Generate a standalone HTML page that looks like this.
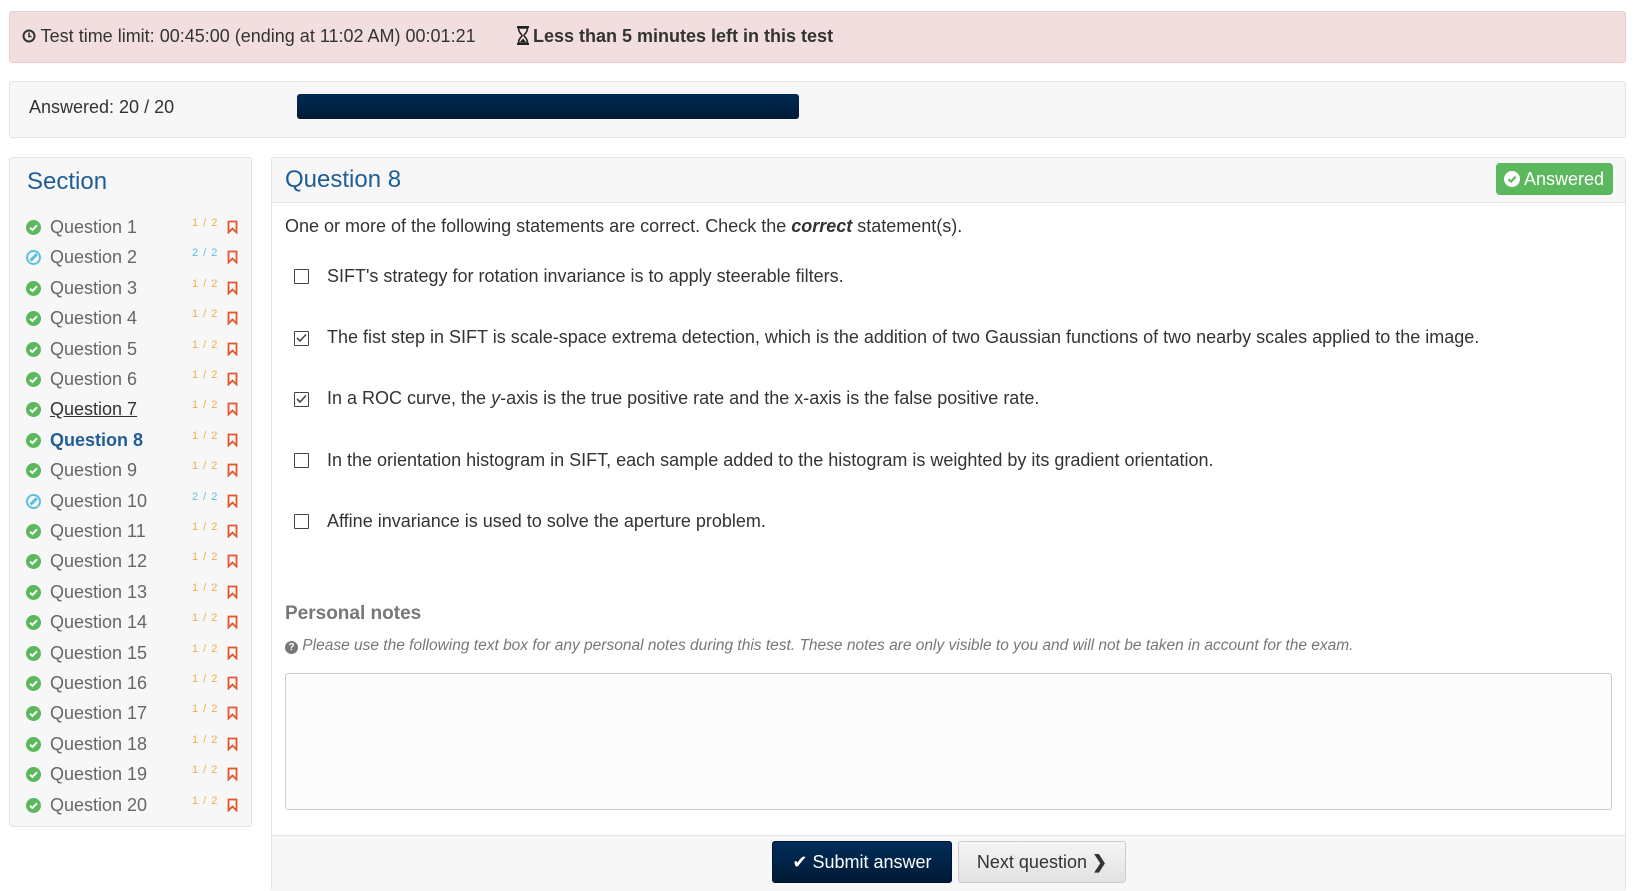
<!DOCTYPE html>
<html><head><meta charset="utf-8"><style>
*{box-sizing:border-box;margin:0;padding:0}
body{width:1636px;height:891px;background:#fff;font-family:"Liberation Sans",sans-serif;color:#333;position:relative;overflow:hidden;font-size:17px}
.abs{position:absolute}
.alert{left:9px;top:11px;width:1617px;height:52px;background:#f2dede;border:1px solid #ebccd1;border-radius:3px}
.well{left:9px;top:81px;width:1617px;height:57px;background:#f7f7f7;border:1px solid #e3e3e3;border-radius:3px}
.bar{left:297px;top:94px;width:502px;height:25px;border-radius:3px;background:linear-gradient(#002b55,#001a35)}
.side{left:9px;top:157px;width:243px;height:670px;background:#f7f7f7;border:1px solid #e3e3e3;border-radius:3px}
.main{left:271px;top:157px;width:1355px;height:734px;border:1px solid #e3e3e3;border-radius:3px;background:#fff}
.mh{left:272px;top:158px;width:1353px;height:45px;background:#f7f7f7;border-bottom:1px solid #e3e3e3}
.mf{left:272px;top:835px;width:1353px;height:56px;background:#f7f7f7;border-top:1px solid #e3e3e3}
.q{left:26px;height:20px;line-height:20px;font-size:18px;color:#666}
.ic{display:inline-block;width:15px;height:15px;border-radius:50%;vertical-align:-2px;margin-right:9px;position:relative}
.sc{position:absolute;left:166px;font-size:11px;color:#f0ad4e;letter-spacing:1px}
.bk{position:absolute;left:201px;top:3px}
.cb{width:15px;height:15px;border:1.5px solid #444;border-radius:1px;left:294px}
.opt{left:327px;font-size:18px;color:#333}
</style></head><body>
<div class="abs alert"></div>
<div class="abs" style="left:22px;top:26px;font-size:18px;color:#333">
<svg width="14" height="14" viewBox="0 0 14 14" style="vertical-align:-1px"><circle cx="7" cy="7" r="5.5" fill="none" stroke="#333" stroke-width="2"/><path d="M7 3.5V7.5H9.5" fill="none" stroke="#333" stroke-width="1.6"/></svg> Test time limit: 00:45:00 (ending at 11:02 AM) 00:01:21</div>
<div class="abs" style="left:516px;top:26px;font-size:18px;font-weight:bold;color:#333"><svg width="14" height="19" viewBox="0 0 14 19" style="vertical-align:-3px;margin-right:3px"><path d="M1 1H13M1 18H13" stroke="#222" stroke-width="2"/><path d="M2.5 2C2.5 7 6 8 6 9.5S2.5 12 2.5 17H11.5C11.5 12 8 11 8 9.5S11.5 7 11.5 2Z" fill="none" stroke="#222" stroke-width="1.6"/><path d="M4 16L7 12.5 10 16Z" fill="#222"/></svg>Less than 5 minutes left in this test</div>
<div class="abs well"></div>
<div class="abs" style="left:29px;top:97px;font-size:18px">Answered: 20 / 20</div>
<div class="abs bar"></div>

<div class="abs side"></div>
<div class="abs" style="left:27px;top:168px;font-size:24px;color:#1f5d96">Section</div>
<div id="ql"></div>

<div class="abs main"></div>
<div class="abs mh"></div>
<div class="abs" style="left:285px;top:166px;font-size:24px;color:#1f5d96">Question 8</div>
<div class="abs" style="left:1496px;top:163px;width:117px;height:32px;background:#5cb85c;border-radius:4px;color:#fff;font-size:18px;line-height:32px;padding-left:8px"><svg width="16" height="16" viewBox="0 0 16 16" style="vertical-align:-2px"><circle cx="8" cy="8" r="8" fill="#fff"/><path d="M4.5 8.2L7 10.6 11.6 5.8" fill="none" stroke="#5cb85c" stroke-width="2.2"/></svg> Answered</div>
<div class="abs" style="left:285px;top:216px;font-size:18px">One or more of the following statements are correct. Check the <b><i>correct</i></b> statement(s).</div>

<div class="abs cb" style="top:269px"></div>
<div class="abs opt" style="top:266px">SIFT's strategy for rotation invariance is to apply steerable filters.</div>
<div class="abs cb" style="top:331px"><svg width="13" height="12" viewBox="0 0 13 12" style="position:absolute;left:0;top:0"><path d="M2 6L5 9 11 2.5" fill="none" stroke="#444" stroke-width="1.6"/></svg></div>
<div class="abs opt" style="top:327px">The fist step in SIFT is scale-space extrema detection, which is the addition of two Gaussian functions of two nearby scales applied to the image.</div>
<div class="abs cb" style="top:392px"><svg width="13" height="12" viewBox="0 0 13 12" style="position:absolute;left:0;top:0"><path d="M2 6L5 9 11 2.5" fill="none" stroke="#444" stroke-width="1.6"/></svg></div>
<div class="abs opt" style="top:388px">In a ROC curve, the <i>y</i>-axis is the true positive rate and the x-axis is the false positive rate.</div>
<div class="abs cb" style="top:453px"></div>
<div class="abs opt" style="top:450px">In the orientation histogram in SIFT, each sample added to the histogram is weighted by its gradient orientation.</div>
<div class="abs cb" style="top:514px"></div>
<div class="abs opt" style="top:511px">Affine invariance is used to solve the aperture problem.</div>

<div class="abs" style="left:285px;top:603px;font-size:19px;font-weight:bold;color:#777">Personal notes</div>
<div class="abs" style="left:285px;top:637px;font-size:15.5px;font-style:italic;color:#777"><span style="display:inline-block;width:13px;height:13px;border-radius:50%;background:#777;color:#fff;font-size:10px;text-align:center;line-height:13px;font-style:normal;font-weight:bold;vertical-align:0">?</span> Please use the following text box for any personal notes during this test. These notes are only visible to you and will not be taken in account for the exam.</div>
<div class="abs" style="left:285px;top:673px;width:1327px;height:137px;border:1px solid #ccc;border-radius:3px;background:#fbfbfb"></div>

<div class="abs mf"></div>
<div class="abs" style="left:772px;top:841px;width:180px;height:42px;background:linear-gradient(#002d5a,#001a35);border:1px solid #001530;border-radius:3px;color:#fff;font-size:18px;line-height:40px;text-align:center">✔ Submit answer</div>
<div class="abs" style="left:958px;top:841px;width:168px;height:42px;background:linear-gradient(#f5f5f5,#e2e2e2);border:1px solid #ccc;border-radius:3px;color:#333;font-size:18px;line-height:40px;text-align:center">Next question <b>❯</b></div>

<script>
var h='';
var blue=[2,10];
for(var i=1;i<=20;i++){
 var y=217+(i-1)*30.4;
 var b=blue.indexOf(i)>=0;
 var ic=b?'<span class="ic" style="border:2.5px solid #5bc0de"><span style="position:absolute;left:1px;top:4px;width:9px;height:2.5px;background:#5bc0de;transform:rotate(-45deg)"></span></span>'
 :'<span class="ic" style="background:#5cb85c"><svg width="15" height="15" viewBox="0 0 15 15" style="position:absolute;left:0;top:0"><path d="M4 7.7L6.4 10 11 5.3" fill="none" stroke="#fff" stroke-width="2"/></svg></span>';
 var st=i==8?'color:#1f5d96;font-weight:bold':(i==7?'color:#333;text-decoration:underline':'');
 h+='<div class="abs q" style="top:'+y+'px;width:220px;'+st+'">'+ic+'Question '+i+
 '<span class="sc" style="top:-4px;font-weight:normal;'+(b?'color:#5bc0de':'')+'">'+(b?'2 / 2':'1 / 2')+'</span>'+
 '<svg class="bk" width="11" height="14" viewBox="0 0 11 14"><path d="M1.5 1.5H9.5V12.5L5.5 8.5 1.5 12.5Z" fill="none" stroke="#e4572e" stroke-width="1.8"/></svg></div>';
}
document.getElementById('ql').innerHTML=h;
</script>
</body></html>
